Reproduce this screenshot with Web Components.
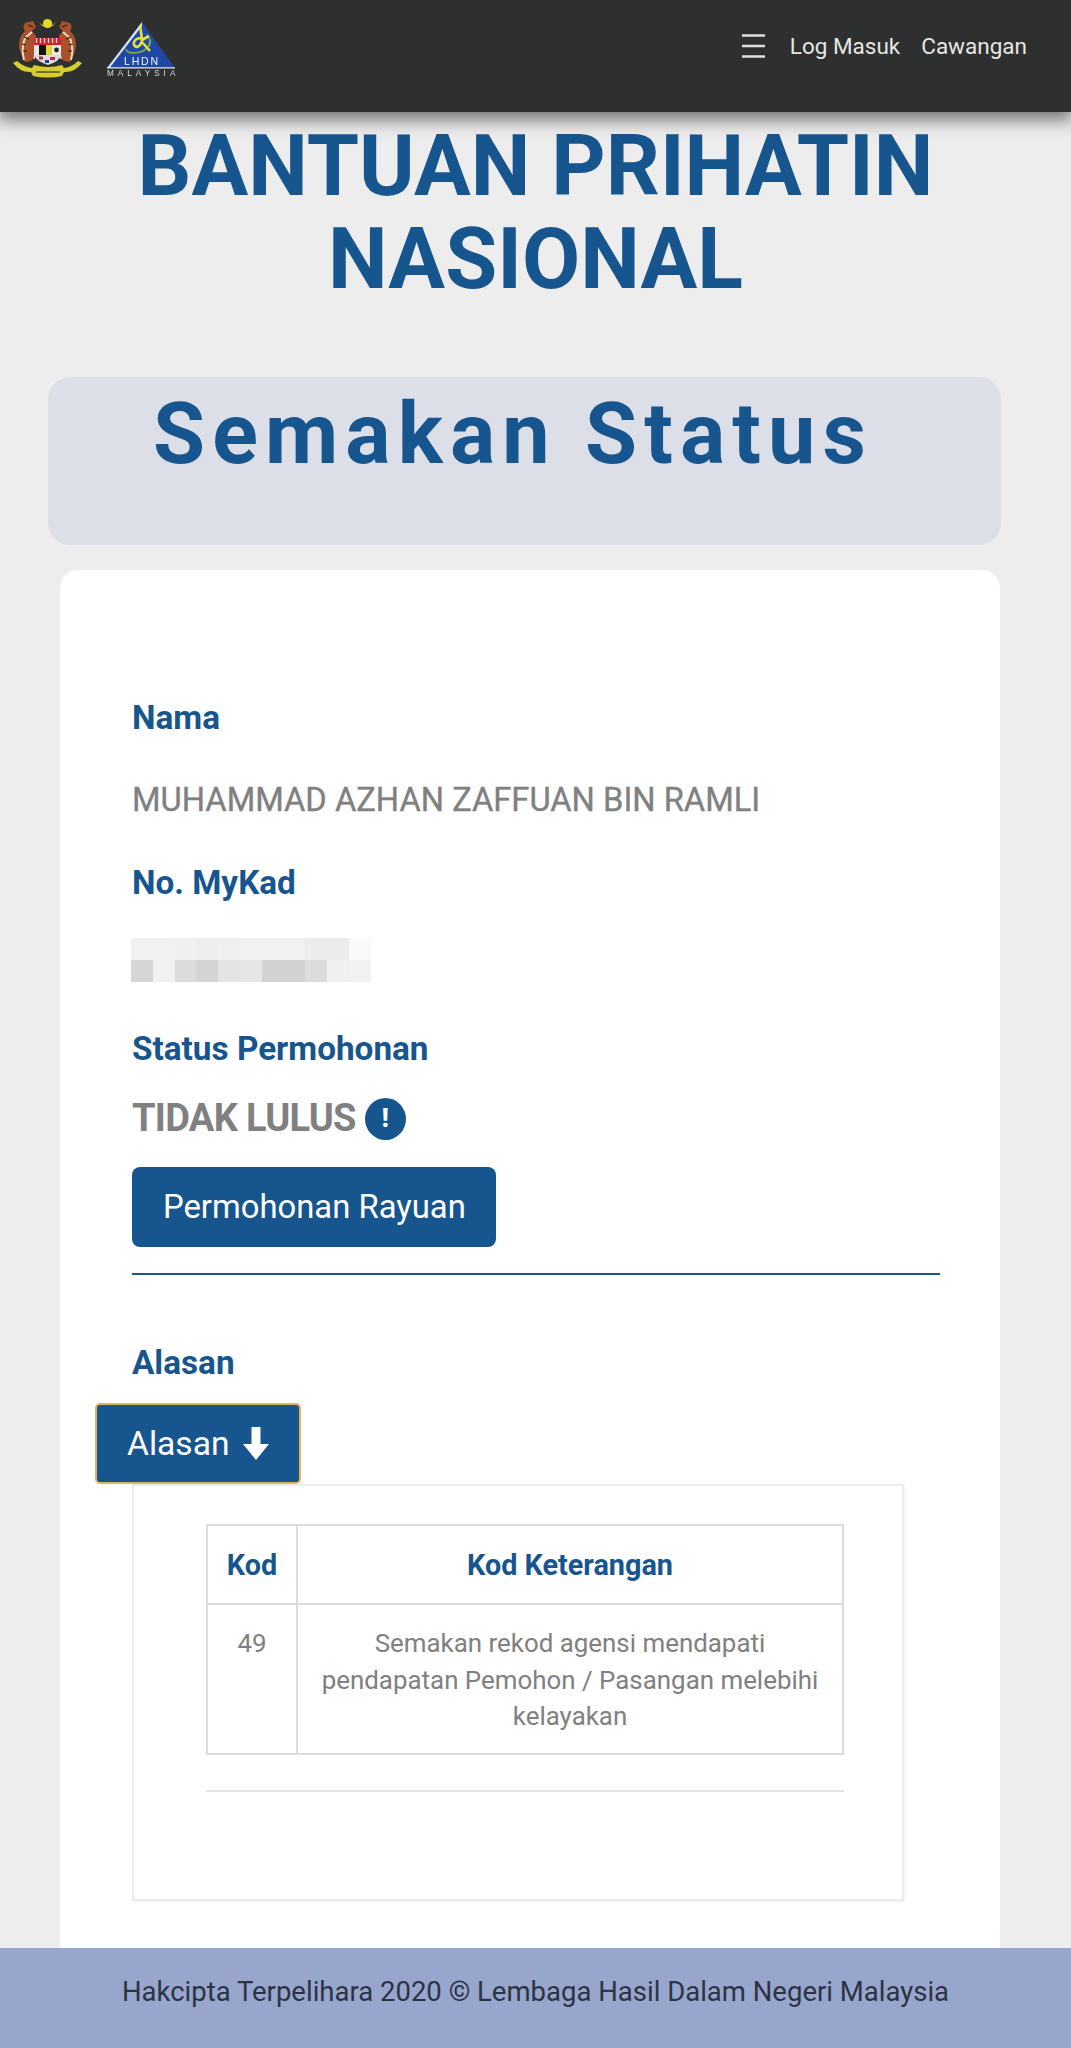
<!DOCTYPE html>
<html><head><meta charset="utf-8"><title>Semakan Status</title>
<style>
html,body{margin:0;padding:0}
body{font-family:Roboto,"Liberation Sans",sans-serif;background:#ededed;overflow:hidden}
</style></head><body>
<bpn-app>
<bpn-nav></bpn-nav>
<bpn-main>
  <bpn-title>BANTUAN PRIHATIN NASIONAL</bpn-title>
  <bpn-banner>Semakan Status</bpn-banner>
  <bpn-card>
    <bpn-label>Nama</bpn-label>
    <bpn-value>MUHAMMAD AZHAN ZAFFUAN BIN RAMLI</bpn-value>
    <bpn-label style="margin-top:45px">No. MyKad</bpn-label>
    <bpn-pixels></bpn-pixels>
    <bpn-label>Status Permohonan</bpn-label>
    <bpn-status>TIDAK LULUS</bpn-status>
    <bpn-button>Permohonan Rayuan</bpn-button>
    <bpn-rule></bpn-rule>
    <bpn-label style="margin-top:69px">Alasan</bpn-label>
    <bpn-button focus arrow style="margin-top:21px">Alasan</bpn-button>
    <bpn-reason></bpn-reason>
  </bpn-card>
</bpn-main>
<bpn-footer>Hakcipta Terpelihara 2020 © Lembaga Hasil Dalam Negeri Malaysia</bpn-footer>
</bpn-app>
<script>
function def(name,html,init){
  customElements.define(name,class extends HTMLElement{
    constructor(){super();this.attachShadow({mode:'open'}).innerHTML=html;}
    connectedCallback(){if(init)init(this);}
  });
}
def('bpn-app',`<style>:host{display:flex;flex-direction:column;height:2048px;width:1071px;overflow:hidden}</style><slot></slot>`);
def('bpn-nav',`<style>
:host{display:flex;align-items:center;height:112px;flex:none;background:#2d302e;box-shadow:0 6px 16px 2px rgba(0,0,0,.5);position:relative;z-index:2;color:#e6e6e6;font-size:22.5px;padding:0 44px 20px 12px;box-sizing:border-box}
.l{display:flex;gap:23px;align-items:flex-start;flex:1;padding-top:6px;filter:blur(.35px)}
.r{display:flex;align-items:center}
.b{margin-right:24px;display:block}
.c{margin-left:21px}
</style>
<div class="l">
<svg width="71" height="60" viewBox="0 0 71 60">
  <path d="M1 45 L5 43 Q12 49 20 50 L22 47 Q36 51 50 47 L52 50 Q60 49 66 43 L70 45 Q62 55 52 54 L50 58 Q36 61 21 58 L19 54 Q9 55 1 45Z" fill="#d6ce2c"/>
  <path d="M24 54H48" stroke="#4c4a18" stroke-width="1.4"/>
  <path d="M13 5 L21 3 L24 9 L20 13 L24 18 L22 40 L19 43 L13 44 Q8 36 7 28 Q7 18 13 13 Q10 9 13 5Z" fill="#a9522b"/>
  <path d="M58 5 L50 3 L47 9 L51 13 L47 18 L49 40 L52 43 L58 44 Q63 36 64 28 Q64 18 58 13 Q61 9 58 5Z" fill="#a9522b"/>
  <path d="M12 42 Q9 30 13 20 L20 14 M59 42 Q62 30 58 20 L51 14" stroke="#eadcc0" stroke-width="2" fill="none"/>
  <path d="M16 7l5 2M12 19l5 2M10 26l4 1M11 33l4 0M55 7l-5 2M59 19l-5 2M61 26l-4 1M60 33l-4 0" stroke="#2a1a10" stroke-width="1.2"/>
  <path d="M24 22Q24 32 22 41M47 22Q47 32 49 41" stroke="#e8e0c8" stroke-width="1.4" fill="none"/>
  <circle cx="35.5" cy="5.5" r="4.6" fill="#e0db2a"/>
  <path d="M27 4 A9.5 9.5 0 0 0 44 4 A10 8.4 0 0 1 27 4Z" fill="#e0db2a"/>
  <rect x="22" y="20" width="27" height="7" fill="#d21f33"/>
  <path d="M24.5 25v-5M28.5 25v-5M32.5 25v-5M36.5 25v-5M40.5 25v-5M44.5 25v-5" stroke="#f2e6a8" stroke-width="1.3"/>
  <rect x="22" y="27" width="5" height="10" fill="#e8e6da"/>
  <rect x="27" y="27" width="7" height="10" fill="#121212"/>
  <rect x="34" y="27" width="6" height="10" fill="#e4d335"/>
  <rect x="40" y="27" width="9" height="10" fill="#efece0"/>
  <circle cx="44.5" cy="32" r="2.4" fill="#222"/>
  <path d="M22 37H49Q48 43 36 47Q24 43 22 37Z" fill="#dbdbe6"/>
  <path d="M27 38.5h4v3h-4zM38 39h5v3h-5z" fill="#b92a34"/>
  <path d="M33 42h4v3h-4z" fill="#2d3c86"/>
</svg>
<svg width="72" height="62" viewBox="0 0 72 62">
  <path d="M1 50 L36 4 L69 50Z" fill="#1f47a6"/>
  <path d="M36 4 L1 50 H3.5 L36 8Z" fill="#dbe4f4"/>
  <path d="M1 49.8H69" stroke="#e8ecf4" stroke-width="1.2"/>
  <path d="M39 14 Q48 22 44 28 Q38 37 24 35.5 Q18 34 20 30 Q21 34 28 34 Q38 34 42 27 Q45 21 39 14Z" fill="#7ea83b"/>
  <path d="M34 7 L36 21 Q36 27 31 29 Q27 28 28 24 Q30 20 35 20 M36 22 L43 18 M35 23 L44 33" stroke="#e6e23c" stroke-width="2.6" fill="none"/>
  <text x="36" y="46.5" text-anchor="middle" font-family="Liberation Sans,sans-serif" font-size="10.5" letter-spacing="1.8" fill="#f4f4f4">LHDN</text>
  <text x="1" y="58" font-family="Liberation Sans,sans-serif" font-size="8.2" letter-spacing="4" fill="#dedede">MALAYSIA</text>
</svg>
</div>
<div class="r">
<svg class="b" width="25" height="24" viewBox="0 0 25 24"><path d="M1 1.5H24M1 12H24M1 22.5H24" stroke="#dedede" stroke-width="2.4"/></svg>
<span>Log Masuk</span><span class="c">Cawangan</span>
</div>`);
def('bpn-main',`<style>:host{display:block;flex:1;min-height:0;overflow:hidden}</style><slot></slot>`);
def('bpn-title',`<style>:host{display:block;text-align:center;color:#17558f;font-weight:700;font-size:84.5px;line-height:93px;padding:8px 100px 0;box-sizing:border-box;width:1071px}</style><slot></slot>`);
def('bpn-banner',`<style>:host{display:block;margin:71px 70px 0 48px;height:168px;box-sizing:border-box;background:#dcdfe8;border-radius:22px;color:#17558f;font-weight:700;font-size:84.5px;letter-spacing:7.15px;line-height:116px;padding-left:105px}</style><slot></slot>`);
def('bpn-card',`<style>:host{display:block;margin:25px 71px 0 60px;background:#fff;border-radius:18px;padding:129px 60px 60px 72px;height:1400px;box-sizing:border-box}</style><slot></slot>`);
def('bpn-label',`<style>:host{display:block;color:#17558f;font-weight:700;font-size:33.3px;line-height:38px}</style><slot></slot>`);
def('bpn-value',`<style>:host{display:block;color:#808080;font-weight:400;font-size:32.7px;line-height:38px;margin-top:44px;-webkit-text-stroke:.35px #808080}</style><slot></slot>`);
const px=[['#f1f1f1','#f1f1f1','#f0f0f0','#ededed','#efefef','#f1f1f1','#f1f1f1','#f1f1f1','#ececec','#ececec','#f9f9f9'],['#d6d6d6','#f1f1f1','#dcdcdc','#d4d4d4','#e4e4e4','#e6e6e6','#d2d2d2','#d2d2d2','#dcdcdc','#f0f0f0','#f2f2f2']];
def('bpn-pixels',`<style>:host{display:grid;grid-template-columns:repeat(11,21.8px);grid-auto-rows:22px;margin:36px 0 48px -1px;width:240px}</style>`+px.flat().map(c=>`<div style="background:${c}"></div>`).join(''));
def('bpn-status',`<style>:host{display:flex;align-items:center;color:#808080;font-weight:700;font-size:38px;line-height:46px;margin:27px 0 26px;letter-spacing:-.7px}
.i{width:41px;height:42px;border-radius:50%;background:#17558f;color:#fff;font-size:25px;font-weight:900;display:flex;align-items:center;justify-content:center;margin-left:9px;letter-spacing:0;position:relative;top:1px}</style><slot></slot><span class="i">!</span>`);
def('bpn-button',`<style>:host{display:block;width:max-content}
.b{display:flex;align-items:center;height:80px;box-sizing:border-box;width:364px;padding:0 31px;background:#17558f;color:#fff;border-radius:8px;font-size:32.8px;line-height:1;white-space:nowrap}
:host([focus]) .b{margin-left:-37px;height:81px;width:206px;border:2px solid #e3b555;border-radius:5px;padding:0 30px;font-size:33.6px}
svg{display:none;margin-left:14px;flex:none}:host([arrow]) svg{display:block}</style>
<div class="b"><slot></slot><svg width="26" height="33" viewBox="0 0 26 33"><path d="M8.5 0H17.5V17H26L13 33 0 17H8.5Z" fill="#fff"/></svg></div>`);
def('bpn-rule',`<style>:host{display:block;height:2px;background:#1b5a7c;margin-top:26px;width:808px}</style>`);
def('bpn-reason',`<style>
:host{display:block;width:772px;height:417px;box-sizing:border-box;border:2px solid #ececec;box-shadow:1px 1px 3px rgba(0,0,0,.06);padding:38px 58px 0 72px;color:#808080;font-size:25.9px}
table{border-collapse:collapse;width:100%;table-layout:fixed;text-align:center}
th,td{border:2px solid #dcdcdc;}
th{color:#17558f;font-weight:700;font-size:28.8px;height:77px;padding:0}
td{padding:20px 20px 18px;line-height:36.6px;vertical-align:top}
.k{width:88px}
hr{border:0;border-top:2px solid #e4e4e4;margin:35px 0 0}
</style>
<table><tr><th class="k">Kod</th><th>Kod Keterangan</th></tr>
<tr><td>49</td><td>Semakan rekod agensi mendapati pendapatan Pemohon / Pasangan melebihi kelayakan</td></tr></table><hr>`);
def('bpn-footer',`<style>:host{display:flex;flex:none;height:100px;box-sizing:border-box;padding-bottom:14px;align-items:center;justify-content:center;background:#98a6cd;color:#2b3445;font-size:27.5px;position:relative;z-index:1}</style><slot></slot>`);
</script>
</body></html>
